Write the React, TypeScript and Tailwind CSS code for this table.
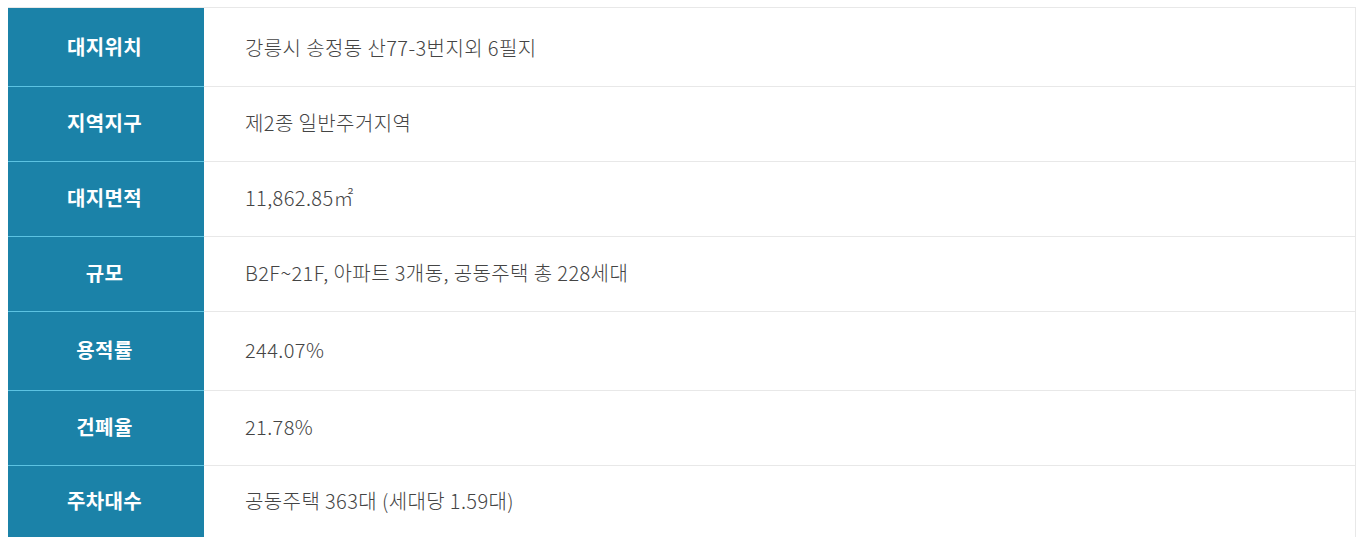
const rows: { label: string; value: React.ReactNode; h: string }[] = [
  { label: "대지위치", value: "강릉시 송정동 산77-3번지외 6필지", h: "h-[78px]" },
  { label: "지역지구", value: "제2종 일반주거지역", h: "h-[75px]" },
  { label: "대지면적", value: "11,862.85㎡", h: "h-[75px]" },
  { label: "규모", value: "B2F~21F, 아파트 3개동, 공동주택 총 228세대", h: "h-[75px]" },
  { label: "용적률", value: "244.07%", h: "h-[79px]" },
  { label: "건폐율", value: "21.78%", h: "h-[75px]" },
  { label: "주차대수", value: "공동주택 363대 (세대당 1.59대)", h: "h-[72px]" },
]

export default function App() {
  return (
    <div className="min-h-screen bg-white pl-2 pt-[7px] pr-[8px] font-['Noto_Sans_CJK_KR','Noto_Sans',sans-serif]">
      <div className="border-t border-r border-[#e8e8e8]">
        {rows.map((row, i) => (
          <div key={row.label} className={`flex ${row.h}`}>
            <div
              className={`flex w-[196px] shrink-0 items-center justify-center pr-[3px] text-[20px] tracking-[0.4px] bg-[#1b82a8] font-bold text-white ${
                i > 0 ? "border-t border-[#5cc3e2] pb-[2px]" : ""
              }`}
            >
              {row.label}
            </div>
            <div
              className={`flex flex-1 items-center pl-[41px] text-[20px] tracking-[0.4px] font-light text-[#444] ${
                i > 0 ? "border-t border-[#e8e8e8] pb-[2px]" : "pt-[1px]"
              }`}
            >
              {row.value}
            </div>
          </div>
        ))}
      </div>
    </div>
  )
}
